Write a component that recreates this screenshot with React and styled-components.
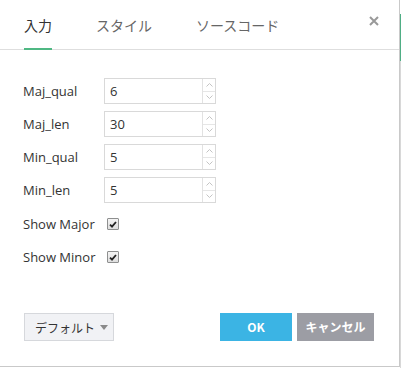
import React from 'react';
import styled, { createGlobalStyle } from 'styled-components';

const GlobalStyle = createGlobalStyle`
  html, body {
    margin: 0;
    padding: 0;
    background: #fff;
  }
  body {
    font-family: "Open Sans", "Noto Sans CJK JP", sans-serif;
    color: #333;
  }
`;

const Page = styled.div`
  display: flex;
  width: 401px;
  height: 368px;
  overflow: hidden;
`;

const Dialog = styled.div`
  width: 399px;
  height: 366px;
  border-right: 1px solid #c9c9c9;
  border-bottom: 1px solid #c9c9c9;
  background: #fff;
  display: flex;
  flex-direction: column;
`;

const Edge = styled.div`
  width: 1px;
  height: 368px;
  background: linear-gradient(
    to bottom,
    #fff 0,
    #fff 14px,
    #4fae85 14px,
    #4fae85 61px,
    #d8d8d8 61px
  );
`;

const Header = styled.div`
  display: flex;
  align-items: flex-end;
  height: 49px;
  padding-left: 24px;
  border-bottom: 1px solid #dedede;
  position: relative;
`;

const Tab = styled.div`
  font-family: "Noto Sans CJK JP", sans-serif;
  font-size: 14px;
  line-height: 20px;
  padding-bottom: 13px;
  margin-right: 44px;
  margin-bottom: -1px;
  color: ${(p) => (p.active ? '#333' : '#666')};
  border-bottom: 2px solid ${(p) => (p.active ? '#4fb883' : 'transparent')};
`;

const Close = styled.div`
  position: absolute;
  top: 16px;
  right: 20px;
  width: 10px;
  height: 10px;
  display: flex;
`;

const Body = styled.div`
  flex: 1;
  padding: 28px 0 0 23px;
  display: flex;
  flex-direction: column;
  gap: 7px;
`;

const Row = styled.div`
  display: flex;
  align-items: center;
  height: ${(p) => p.h || 26}px;
`;

const Label = styled.div`
  width: 81px;
  font-size: 13px;
  color: #333;
`;

const CheckLabel = styled(Label)`
  width: auto;
  margin-right: 12px;
`;

const NumberBox = styled.div`
  display: flex;
  width: 110px;
  height: 24px;
  border: 1px solid #d9d9d9;
  background: #fff;
`;

const Value = styled.div`
  flex: 1;
  padding-left: 5px;
  font-size: 13px;
  line-height: 24px;
  color: #333;
`;

const Stepper = styled.div`
  width: 12px;
  border-left: 1px solid #e2e2e2;
  display: flex;
  flex-direction: column;
`;

const Step = styled.div`
  flex: 1;
  display: flex;
  align-items: center;
  justify-content: center;
  & + & {
    border-top: 1px solid #e6e6e6;
  }
`;

const Box = styled.div`
  width: 10px;
  height: 10px;
  border: 1px solid #8e8f8f;
  border-radius: 1px;
  background: linear-gradient(#f4f4f4, #dedede);
  display: flex;
  align-items: center;
  justify-content: center;
`;

const Footer = styled.div`
  display: flex;
  align-items: center;
  padding: 0 25px 25px 24px;
`;

const Dropdown = styled.div`
  display: flex;
  align-items: center;
  width: 88px;
  height: 26px;
  border: 1px solid #d6d8dc;
  background: #f1f2f5;
  font-family: "Noto Sans CJK JP", sans-serif;
  font-size: 12px;
  color: #333;
  white-space: nowrap;
  > span {
    margin-left: 10px;
    margin-right: 5px;
  }
`;

const Caret = styled.div`
  width: 0;
  height: 0;
  border-left: 4px solid transparent;
  border-right: 4px solid transparent;
  border-top: 5px solid #8a8a8a;
`;

const Spacer = styled.div`
  flex: 1;
`;

const Button = styled.div`
  height: 28px;
  width: ${(p) => p.w}px;
  margin-left: ${(p) => p.ml || 0}px;
  display: flex;
  align-items: center;
  justify-content: center;
  background: ${(p) => p.bg};
  color: #fff;
  font-family: "Noto Sans CJK JP", sans-serif;
  font-weight: 700;
  font-size: 12px;
  padding-bottom: 2px;
  box-sizing: border-box;
  white-space: nowrap;
`;

function Chevron({ up }) {
  return (
    <svg width="7" height="4" viewBox="0 0 7 4">
      <path
        d={up ? 'M0.5 3.5 L3.5 0.5 L6.5 3.5' : 'M0.5 0.5 L3.5 3.5 L6.5 0.5'}
        fill="none"
        stroke="#c4c4c4"
        strokeWidth="1"
      />
    </svg>
  );
}

function NumberField({ value }) {
  return (
    <NumberBox>
      <Value>{value}</Value>
      <Stepper>
        <Step><Chevron up /></Step>
        <Step><Chevron /></Step>
      </Stepper>
    </NumberBox>
  );
}

function Check() {
  return (
    <Box>
      <svg width="8" height="7" viewBox="0 0 8 7">
        <path d="M1 3.6 L3 5.6 L7 1" fill="none" stroke="#222" strokeWidth="1.8" />
      </svg>
    </Box>
  );
}

const fields = [
  { label: 'Maj_qual', value: '6' },
  { label: 'Maj_len', value: '30' },
  { label: 'Min_qual', value: '5' },
  { label: 'Min_len', value: '5' },
];

export default function App() {
  return (
    <Page>
      <GlobalStyle />
      <Dialog>
        <Header>
          <Tab active>入力</Tab>
          <Tab>スタイル</Tab>
          <Tab>ソースコード</Tab>
          <Close>
            <svg width="10" height="10" viewBox="0 0 10 10">
              <path d="M1 1 L9 9 M9 1 L1 9" stroke="#999" strokeWidth="2" />
            </svg>
          </Close>
        </Header>
        <Body>
          {fields.map((f) => (
            <Row key={f.label}>
              <Label>{f.label}</Label>
              <NumberField value={f.value} />
            </Row>
          ))}
          <Row h={26} style={{ marginTop: 1 }}>
            <CheckLabel>Show Major</CheckLabel>
            <Check />
          </Row>
          <Row h={26}>
            <CheckLabel>Show Minor</CheckLabel>
            <Check />
          </Row>
        </Body>
        <Footer>
          <Dropdown>
            <span>デフォルト</span>
            <Caret />
          </Dropdown>
          <Spacer />
          <Button w={72} bg="#3bb4e4">OK</Button>
          <Button w={77} ml={5} bg="#9c9da4">キャンセル</Button>
        </Footer>
      </Dialog>
      <Edge />
    </Page>
  );
}
